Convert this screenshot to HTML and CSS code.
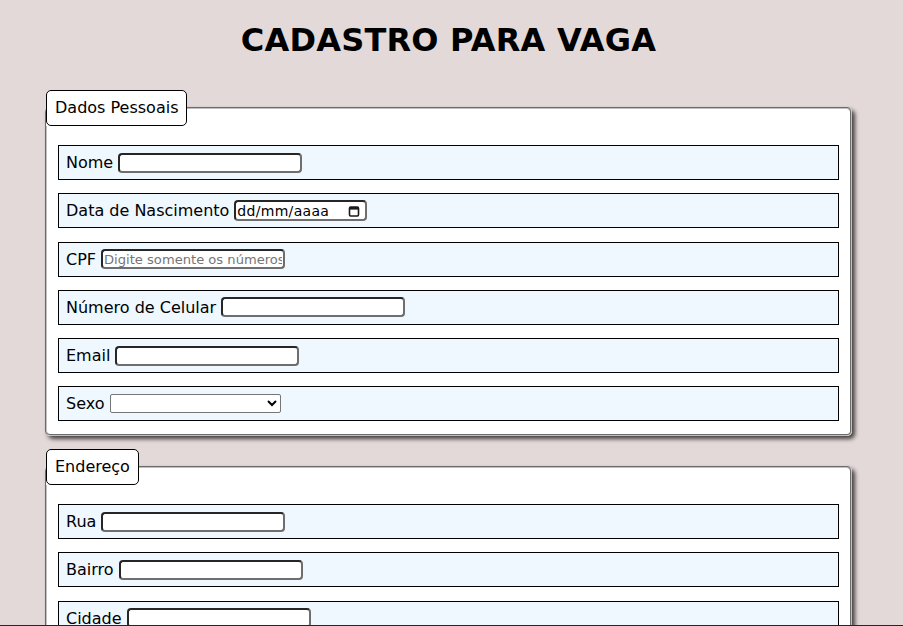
FILE: index.html
```html
<!DOCTYPE html>
<html lang="pt-BR">
<head>
<meta charset="utf-8">
<title>Cadastro para Vaga</title>
<link rel="stylesheet" href="styles.css">
</head>
<body>
<main class="page">
  <h1 class="title">CADASTRO PARA VAGA</h1>
  <form class="form">
    <fieldset class="group">
      <legend class="group-title">Dados Pessoais</legend>
      <div class="row"><label class="row-label" for="nome">Nome</label><input class="field" id="nome" type="text"></div>
      <div class="row"><label class="row-label">Data de Nascimento</label><span class="field date"><span class="date-text">dd/mm/aaaa</span><svg class="cal" width="12" height="12" viewBox="0 0 12 12"><rect x="1.5" y="2" width="9" height="9" rx="1.2" fill="none" stroke="#1a1a1a" stroke-width="1.6"/><rect x="1.5" y="2" width="9" height="2.6" fill="#1a1a1a"/></svg></span></div>
      <div class="row"><label class="row-label" for="cpf">CPF</label><input class="field cpf" id="cpf" type="text" placeholder="Digite somente os números"></div>
      <div class="row"><label class="row-label" for="cel">Número de Celular</label><input class="field" id="cel" type="text"></div>
      <div class="row"><label class="row-label" for="email">Email</label><input class="field" id="email" type="text"></div>
      <div class="row"><label class="row-label sexo" for="sexo">Sexo</label><select class="select" id="sexo"><option></option><option>Masculino</option><option>Feminino</option></select></div>
    </fieldset>
    <fieldset class="group">
      <legend class="group-title">Endereço</legend>
      <div class="row"><label class="row-label" for="rua">Rua</label><input class="field" id="rua" type="text"></div>
      <div class="row"><label class="row-label" for="bairro">Bairro</label><input class="field" id="bairro" type="text"></div>
      <div class="row"><label class="row-label" for="cidade">Cidade</label><input class="field" id="cidade" type="text"></div>
      <div class="row"><label class="row-label" for="estado">Estado</label><input class="field" id="estado" type="text"></div>
    </fieldset>
  </form>
</main>
<div class="edge"></div>
</body>
</html>
```
FILE: styles.css
```css
html, body {
  margin: 0;
  padding: 0;
}
body {
  background: #e4d9d9;
  font-family: "DejaVu Sans", Verdana, sans-serif;
  font-size: 16px;
  color: #000;
}
.page {
  width: 807px;
  margin-left: 45px;
}
.title {
  margin: 21px 0 31px;
  font-size: 32px;
  line-height: 38px;
  font-weight: bold;
  letter-spacing: 0.2px;
  text-align: center;
}
.form {
  margin: 0;
}
.group {
  margin: 0 0 12.75px;
  padding: 19px 11px 13px;
  border: 2px groove #c0c0c0;
  border-radius: 5px;
  background: #fff;
  box-shadow: 3px 3px 4px rgba(0, 0, 0, 0.7);
}
.group-title {
  margin-left: -12px;
  padding: 8px;
  line-height: 18px;
  border: 1px solid #000;
  border-radius: 5px;
  background: #fff;
}
.row {
  display: flex;
  align-items: center;
  gap: 5px;
  height: 35px;
  box-sizing: border-box;
  padding: 0 7px;
  border: 1px solid #000;
  background: #eff7ff;
  margin-bottom: 13.25px;
}
.row:last-child {
  margin-bottom: 0;
}
.row-label {
  line-height: 19px;
  white-space: nowrap;
}
.sexo {
  margin-right: 1px;
}
.field {
  box-sizing: border-box;
  width: 184px;
  height: 20px;
  margin: 0;
  padding: 0 1px;
  border: 2px solid;
  border-color: #262626 #6e6e6e #6e6e6e #262626;
  border-radius: 4px;
  background: #fff;
  font-family: "DejaVu Sans", Verdana, sans-serif;
  font-size: 13.33px;
  color: #000;
}
.cpf {
  font-size: 13.1px;
}
.field::placeholder {
  color: #757575;
}
.date {
  display: inline-flex;
  align-items: center;
  justify-content: space-between;
  width: 133px;
  height: 21px;
  padding: 0 5px 0 1px;
}
.date-text {
  font-size: 14px;
  letter-spacing: 0.3px;
}
.cal {
  display: block;
}
.select {
  box-sizing: border-box;
  width: 171px;
  height: 19px;
  margin: 0;
  border: 1px solid #767676;
  border-radius: 2px;
  background: #fff;
  font-family: "DejaVu Sans", Verdana, sans-serif;
  font-size: 13px;
}
.edge {
  position: fixed;
  left: 0;
  right: 0;
  bottom: 0;
  height: 1px;
  background: #262626;
}
```
